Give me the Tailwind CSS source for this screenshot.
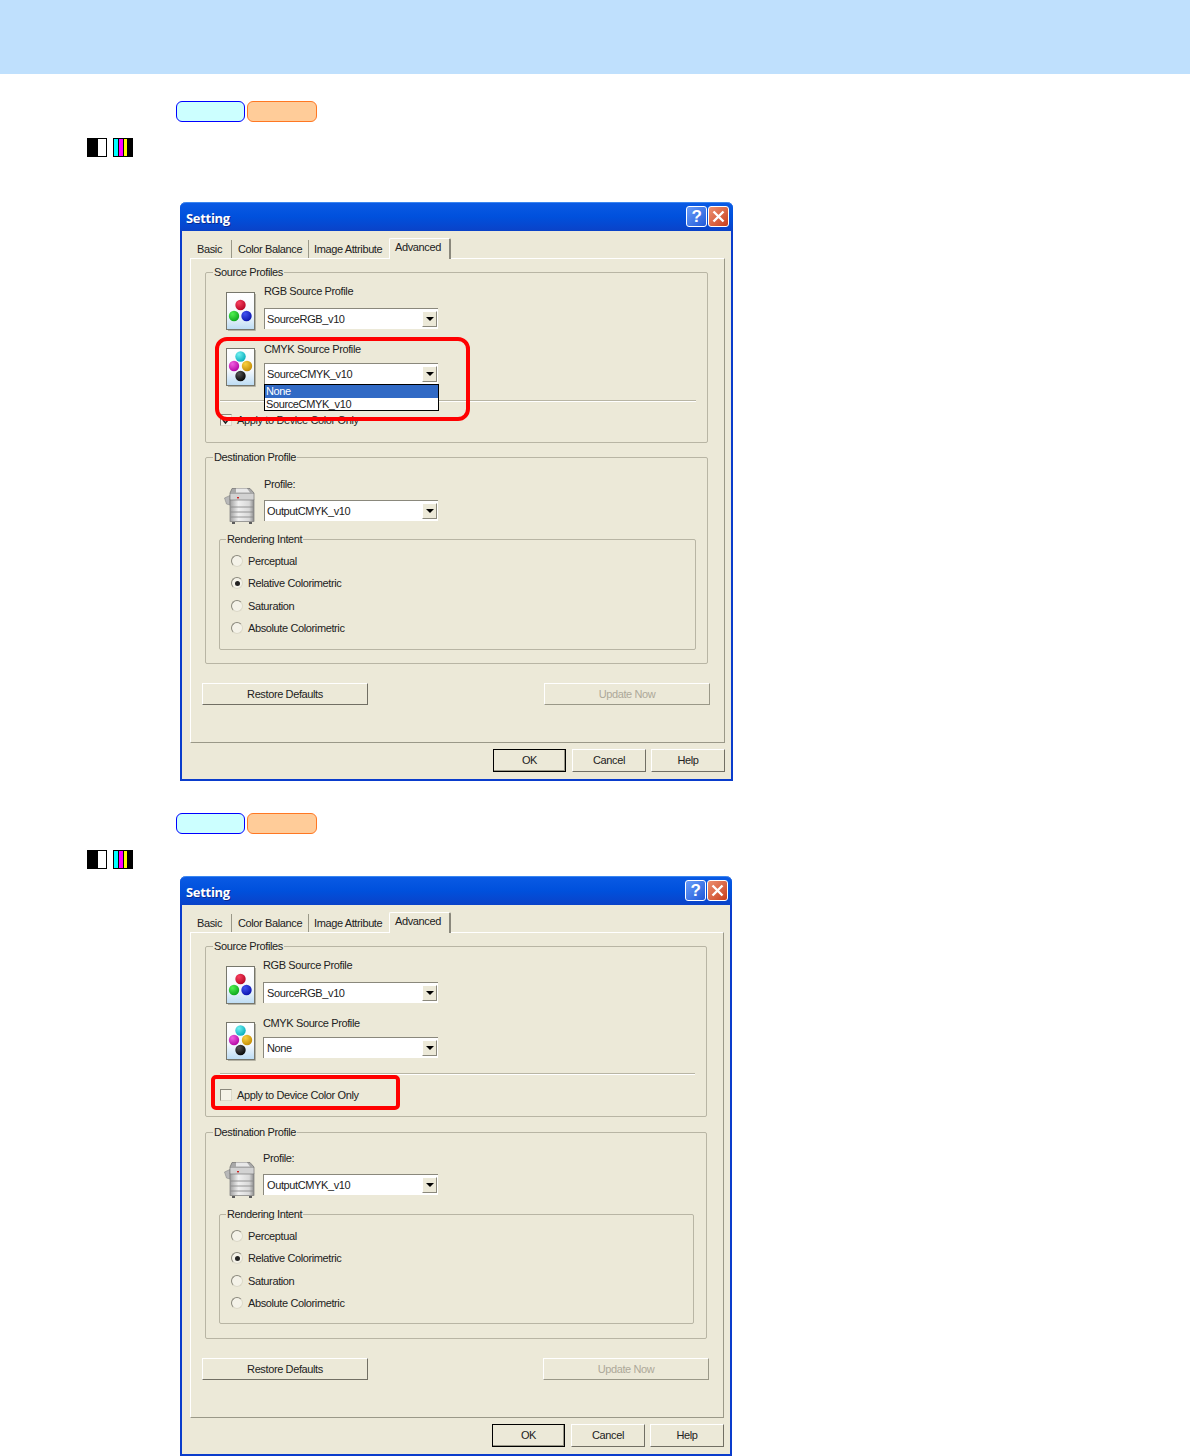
<!DOCTYPE html>
<html lang="en">
<head>
  <meta charset="UTF-8">
  <title>Setting</title>
  <script src="https://cdn.jsdelivr.net/npm/@tailwindcss/browser@4"></script>
</head>
<body class="relative w-[1190px] h-[1456px] overflow-hidden bg-white font-['Liberation_Sans',sans-serif] text-[11px] leading-[14px] tracking-[-0.38px] text-[#222]">

  <svg class="absolute w-0 h-0">
    <defs>
      <linearGradient id="paper" x1="0" y1="0" x2="0" y2="1">
        <stop offset="0" stop-color="#ffffff"/><stop offset="0.6" stop-color="#f4f8fc"/><stop offset="1" stop-color="#bcdcf4"/>
      </linearGradient>
      <radialGradient id="r" cx="0.35" cy="0.3" r="0.8"><stop offset="0" stop-color="#f84060"/><stop offset="1" stop-color="#b00020"/></radialGradient>
      <radialGradient id="g" cx="0.35" cy="0.3" r="0.8"><stop offset="0" stop-color="#50f050"/><stop offset="1" stop-color="#08a018"/></radialGradient>
      <radialGradient id="b" cx="0.35" cy="0.3" r="0.8"><stop offset="0" stop-color="#4050f0"/><stop offset="1" stop-color="#0810a8"/></radialGradient>
      <radialGradient id="c" cx="0.35" cy="0.3" r="0.8"><stop offset="0" stop-color="#70f0f0"/><stop offset="1" stop-color="#00a8b8"/></radialGradient>
      <radialGradient id="m" cx="0.35" cy="0.3" r="0.8"><stop offset="0" stop-color="#f060e0"/><stop offset="1" stop-color="#b000a0"/></radialGradient>
      <radialGradient id="y" cx="0.35" cy="0.3" r="0.8"><stop offset="0" stop-color="#f8d040"/><stop offset="1" stop-color="#c08800"/></radialGradient>
      <radialGradient id="k" cx="0.35" cy="0.3" r="0.8"><stop offset="0" stop-color="#555555"/><stop offset="1" stop-color="#000000"/></radialGradient>
      <linearGradient id="copier" x1="0" y1="0" x2="1" y2="0">
        <stop offset="0" stop-color="#a0a0a0"/><stop offset="0.35" stop-color="#f0f0f0"/><stop offset="0.8" stop-color="#d8d8d8"/><stop offset="1" stop-color="#8c8c8c"/>
      </linearGradient>
      <symbol id="icon-rgb" viewBox="0 0 30 39">
        <rect x="0.5" y="0.5" width="28" height="37" fill="url(#paper)" stroke="#77776c"/>
        <path d="M29.5 2V38.5H2" fill="none" stroke="#b4b2a4"/>
        <circle cx="14.5" cy="13" r="5.2" fill="url(#r)"/>
        <circle cx="8" cy="24" r="5.2" fill="url(#g)"/>
        <circle cx="20.5" cy="24" r="5.2" fill="url(#b)"/>
      </symbol>
      <symbol id="icon-cmyk" viewBox="0 0 30 39">
        <rect x="0.5" y="0.5" width="28" height="37" fill="url(#paper)" stroke="#77776c"/>
        <path d="M29.5 2V38.5H2" fill="none" stroke="#b4b2a4"/>
        <circle cx="14.5" cy="8.5" r="5.2" fill="url(#c)"/>
        <circle cx="8" cy="18" r="5.2" fill="url(#m)"/>
        <circle cx="21" cy="18" r="5.2" fill="url(#y)"/>
        <circle cx="14.5" cy="28" r="5.2" fill="url(#k)"/>
      </symbol>
      <symbol id="icon-copier" viewBox="0 0 33 40">
        <path d="M0.5 13L6 10.5V20L2.5 19Z" fill="#b8b8b8" stroke="#8a8a8a" stroke-width="0.6"/>
        <path d="M8 3.5H26L30 8V15H6V8Z" fill="#a8a8a8" stroke="#6e6e6e" stroke-width="0.7"/>
        <path d="M12 3.5H23L26 7.5H12Z" fill="#e8e8e8"/>
        <path d="M6.5 9H29.5V15H6.5Z" fill="#d2d2d2"/>
        <rect x="13" y="12" width="2" height="1.4" fill="#d02020"/>
        <rect x="6" y="15" width="24" height="21.5" fill="url(#copier)" stroke="#7a7a7a" stroke-width="0.7"/>
        <path d="M6.5 22H29.5M6.5 27H29.5M6.5 32H29.5" stroke="#8a8a8a" stroke-width="0.9"/>
        <path d="M8 37H11V39H8ZM25 37H28V39H25Z" fill="#5c5c5c"/>
      </symbol>
      <symbol id="arrow" viewBox="0 0 8 4"><path d="M0 0H8L4 4Z" fill="#000"/></symbol>
    </defs>
  </svg>

  <header class="h-[74px] bg-[#bfe0fd]"></header>

  <!-- first step -->
  <div class="mt-[27px] pl-[176px] flex gap-[2px]">
    <span class="w-[69px] h-[21px] rounded-[6px] border border-[#0000ff] bg-[#ccffff]"></span>
    <span class="w-[70px] h-[21px] rounded-[6px] border border-[#ff7722] bg-[#ffcc99]"></span>
  </div>
  <div class="mt-[16px] pl-[87px] flex gap-[6px]">
    <span class="w-[20px] h-[19px] border border-black flex"><span class="w-[10px] bg-black"></span></span>
    <span class="w-[20px] h-[19px] border border-black flex bg-black gap-[1px]"><span class="w-[4px] bg-[#00ffff]"></span><span class="w-[4px] bg-[#ff00ff]"></span><span class="w-[3px] bg-[#ffff00]"></span></span>
  </div>

  <section class="mt-[45px] ml-[180px] w-[553px] h-[579px] relative flex flex-col rounded-t-[6px] border-x-2 border-b-2 border-[#0a3ccc] bg-[#ece9d8]">
    <div class="-mx-[2px] h-[29px] shrink-0 rounded-t-[6px] border-t border-[#3a86f0] bg-gradient-to-b from-[#0a5ae4] via-[#0050dc] to-[#0a42c8] flex items-center pl-[6px] pr-[4px]">
      <span class="mt-[1px] font-['Open_Sans',sans-serif] font-bold text-[13px] tracking-[-0.3px] text-white [text-shadow:1px_1px_#0a2a90]">Setting</span>
      <span class="ml-auto mb-[1px] w-[21px] h-[21px] rounded-[3px] border border-white bg-gradient-to-br from-[#6a9cf8] to-[#2058d8] text-white font-bold text-[17px] leading-[19px] text-center">?</span>
      <span class="ml-[1px] mb-[1px] w-[21px] h-[21px] rounded-[3px] border border-white bg-gradient-to-br from-[#ec9070] to-[#c83c18] flex items-center justify-center">
        <svg class="w-[13px] h-[13px]" viewBox="0 0 13 13"><path d="M1.5 1.5L11.5 11.5M11.5 1.5L1.5 11.5" stroke="#fff" stroke-width="2.4"/></svg>
      </span>
    </div>
    <div class="pt-[7px] pl-[8px] pr-[6px] flex flex-col flex-1">
      <div class="relative z-10 h-[20px] pl-[2px] flex items-end">
        <span class="w-[40px] h-[18px] pl-[5px] pt-[2px] border-r border-[#9a9888]">Basic</span>
        <span class="w-[77px] h-[18px] pl-[6px] pt-[2px] border-r border-[#9a9888]">Color Balance</span>
        <span class="w-[80px] h-[18px] pl-[5px] pt-[2px]">Image Attribute</span>
        <span class="w-[62px] h-[21px] -mb-px pl-[5px] pt-[1px] bg-[#ece9d8] border-t border-l border-white border-r-2 border-r-[#8a887c] rounded-t-[2px]">Advanced</span>
      </div>
      <div class="h-[485px] border border-white border-r-[#9a9888] border-b-[#9a9888] pt-[6px] pl-[14px]">
        <fieldset class="w-[503px] h-[178px] border border-[#b8b5a4] rounded-[2px]">
          <legend class="ml-[7px] px-px h-[14px]">Source Profiles</legend>
          <div class="mt-[5px] pl-[20px] flex items-start">
            <svg class="mt-[8px] w-[30px] h-[39px]"><use href="#icon-rgb"/></svg>
            <div class="ml-[8px]">
              <div class="h-[14px]">RGB Source Profile</div>
              <div class="mt-[10px] w-[174px] h-[21px] bg-white border-t border-l border-[#8a887c] flex items-center pl-[2px]">
                <span>SourceRGB_v10</span>
                <span class="ml-auto mr-[1px] w-[15px] h-[16px] bg-[#ece9d8] border border-white border-r-[#8a887c] border-b-[#8a887c] flex items-center justify-center"><svg class="w-[8px] h-[4px]"><use href="#arrow"/></svg></span>
              </div>
            </div>
          </div>
          <div class="mt-[11px] pl-[20px] flex items-start">
            <svg class="mt-[6px] w-[30px] h-[39px]"><use href="#icon-cmyk"/></svg>
            <div class="ml-[8px]">
              <div class="h-[14px]">CMYK Source Profile</div>
              <div class="relative mt-[7px] w-[174px] h-[21px] bg-white border-t border-l border-[#8a887c] flex items-center pl-[2px]">
                <span>SourceCMYK_v10</span>
                <span class="ml-auto mr-[1px] w-[15px] h-[16px] bg-[#ece9d8] border border-white border-r-[#8a887c] border-b-[#8a887c] flex items-center justify-center"><svg class="w-[8px] h-[4px]"><use href="#arrow"/></svg></span>
                <div class="absolute z-10 -left-px top-[20px] w-[175px] h-[27px] bg-white border border-black">
                  <div class="h-[13px] leading-[13px] pl-px bg-[#316ac5] text-white">None</div>
                  <div class="h-[12px] leading-[12px] pl-px">SourceCMYK_v10</div>
                </div>
              </div>
            </div>
          </div>
          <div class="mt-[13px] ml-[14px] mr-[11px] h-[2px] border-t border-b border-t-[#b8b5a4] border-b-white"></div>
          <div class="mt-[11px] pl-[14px] flex items-center">
            <span class="w-[12px] h-[12px] bg-[#f4f2e8] border border-[#8a887c] border-r-[#dcd9c8] border-b-[#dcd9c8] flex items-center justify-center"><svg class="w-[9px] h-[9px]" viewBox="0 0 9 9"><path d="M1 4L3.5 7L8 1.5" fill="none" stroke="#222" stroke-width="1.6"/></svg></span>
            <span class="ml-[5px]">Apply to Device Color Only</span>
          </div>
        </fieldset>
        <fieldset class="mt-[7px] w-[503px] h-[214px] border border-[#b8b5a4] rounded-[2px]">
          <legend class="ml-[7px] px-px h-[14px]">Destination Profile</legend>
          <div class="mt-[13px] pl-[19px] flex items-start">
            <svg class="mt-[8px] w-[33px] h-[40px] -ml-[1px]"><use href="#icon-copier"/></svg>
            <div class="ml-[7px]">
              <div class="h-[14px]">Profile:</div>
              <div class="mt-[9px] w-[174px] h-[21px] bg-white border-t border-l border-[#8a887c] flex items-center pl-[2px]">
                <span>OutputCMYK_v10</span>
                <span class="ml-auto mr-[1px] w-[15px] h-[16px] bg-[#ece9d8] border border-white border-r-[#8a887c] border-b-[#8a887c] flex items-center justify-center"><svg class="w-[8px] h-[4px]"><use href="#arrow"/></svg></span>
              </div>
            </div>
          </div>
          <fieldset class="mt-[7px] ml-[13px] w-[477px] h-[118px] border border-[#b8b5a4] rounded-[2px] pl-[11px]">
            <legend class="-ml-[5px] px-px h-[14px]">Rendering Intent</legend>
            <div class="mt-[4px] flex flex-col">
              <div class="h-[22.3px] flex items-center"><span class="w-[12px] h-[12px] rounded-full bg-[#f4f2e8] border border-[#8a887c] border-r-[#dcd9c8] border-b-[#dcd9c8]"></span><span class="ml-[5px]">Perceptual</span></div>
              <div class="h-[22.3px] flex items-center"><span class="w-[12px] h-[12px] rounded-full bg-[#f4f2e8] border border-[#8a887c] border-r-[#dcd9c8] border-b-[#dcd9c8] flex items-center justify-center"><span class="w-[5px] h-[5px] rounded-full bg-[#222]"></span></span><span class="ml-[5px]">Relative Colorimetric</span></div>
              <div class="h-[22.3px] flex items-center"><span class="w-[12px] h-[12px] rounded-full bg-[#f4f2e8] border border-[#8a887c] border-r-[#dcd9c8] border-b-[#dcd9c8]"></span><span class="ml-[5px]">Saturation</span></div>
              <div class="h-[22.3px] flex items-center"><span class="w-[12px] h-[12px] rounded-full bg-[#f4f2e8] border border-[#8a887c] border-r-[#dcd9c8] border-b-[#dcd9c8]"></span><span class="ml-[5px]">Absolute Colorimetric</span></div>
            </div>
          </fieldset>
        </fieldset>
        <div class="mt-[19px] -ml-[3px] w-[508px] flex justify-between">
          <span class="w-[166px] h-[22px] pb-[1px] border border-white border-r-[#716f64] border-b-[#716f64] flex items-center justify-center">Restore Defaults</span>
          <span class="w-[166px] h-[22px] pb-[1px] border border-white border-r-[#9a9888] border-b-[#9a9888] flex items-center justify-center text-[#aca899]">Update Now</span>
        </div>
      </div>
      <div class="mt-[6px] flex justify-end gap-[6px]">
        <span class="w-[73px] h-[23px] border border-black shadow-[inset_-1px_-1px_#9a9888] flex items-center justify-center pb-[2px]">OK</span>
        <span class="w-[74px] h-[23px] mr-[-1px] border border-white border-r-[#716f64] border-b-[#716f64] flex items-center justify-center pb-[2px]">Cancel</span>
        <span class="w-[74px] h-[23px] border border-white border-r-[#716f64] border-b-[#716f64] flex items-center justify-center pb-[2px]">Help</span>
      </div>
    </div>
  </section>

  <!-- second step -->
  <div class="mt-[32px] pl-[176px] flex gap-[2px]">
    <span class="w-[69px] h-[21px] rounded-[6px] border border-[#0000ff] bg-[#ccffff]"></span>
    <span class="w-[70px] h-[21px] rounded-[6px] border border-[#ff7722] bg-[#ffcc99]"></span>
  </div>
  <div class="mt-[16px] pl-[87px] flex gap-[6px]">
    <span class="w-[20px] h-[19px] border border-black flex"><span class="w-[10px] bg-black"></span></span>
    <span class="w-[20px] h-[19px] border border-black flex bg-black gap-[1px]"><span class="w-[4px] bg-[#00ffff]"></span><span class="w-[4px] bg-[#ff00ff]"></span><span class="w-[3px] bg-[#ffff00]"></span></span>
  </div>

  <section class="mt-[7px] ml-[180px] w-[552px] h-[580px] relative flex flex-col rounded-t-[6px] border-x-2 border-b-2 border-[#0a3ccc] bg-[#ece9d8]">
    <div class="-mx-[2px] h-[29px] shrink-0 rounded-t-[6px] border-t border-[#3a86f0] bg-gradient-to-b from-[#0a5ae4] via-[#0050dc] to-[#0a42c8] flex items-center pl-[6px] pr-[4px]">
      <span class="mt-[1px] font-['Open_Sans',sans-serif] font-bold text-[13px] tracking-[-0.3px] text-white [text-shadow:1px_1px_#0a2a90]">Setting</span>
      <span class="ml-auto mb-[1px] w-[21px] h-[21px] rounded-[3px] border border-white bg-gradient-to-br from-[#6a9cf8] to-[#2058d8] text-white font-bold text-[17px] leading-[19px] text-center">?</span>
      <span class="ml-[1px] mb-[1px] w-[21px] h-[21px] rounded-[3px] border border-white bg-gradient-to-br from-[#ec9070] to-[#c83c18] flex items-center justify-center">
        <svg class="w-[13px] h-[13px]" viewBox="0 0 13 13"><path d="M1.5 1.5L11.5 11.5M11.5 1.5L1.5 11.5" stroke="#fff" stroke-width="2.4"/></svg>
      </span>
    </div>
    <div class="pt-[7px] pl-[8px] pr-[6px] flex flex-col flex-1">
      <div class="relative z-10 h-[20px] pl-[2px] flex items-end">
        <span class="w-[40px] h-[18px] pl-[5px] pt-[2px] border-r border-[#9a9888]">Basic</span>
        <span class="w-[77px] h-[18px] pl-[6px] pt-[2px] border-r border-[#9a9888]">Color Balance</span>
        <span class="w-[80px] h-[18px] pl-[5px] pt-[2px]">Image Attribute</span>
        <span class="w-[62px] h-[21px] -mb-px pl-[5px] pt-[1px] bg-[#ece9d8] border-t border-l border-white border-r-2 border-r-[#8a887c] rounded-t-[2px]">Advanced</span>
      </div>
      <div class="h-[486px] border border-white border-r-[#9a9888] border-b-[#9a9888] pt-[6px] pl-[14px]">
        <fieldset class="w-[502px] h-[178px] border border-[#b8b5a4] rounded-[2px]">
          <legend class="ml-[7px] px-px h-[14px]">Source Profiles</legend>
          <div class="mt-[5px] pl-[20px] flex items-start">
            <svg class="mt-[8px] w-[30px] h-[39px]"><use href="#icon-rgb"/></svg>
            <div class="ml-[7px]">
              <div class="h-[14px]">RGB Source Profile</div>
              <div class="mt-[10px] w-[175px] h-[21px] bg-white border-t border-l border-[#8a887c] flex items-center pl-[3px]">
                <span>SourceRGB_v10</span>
                <span class="ml-auto mr-[1px] w-[15px] h-[16px] bg-[#ece9d8] border border-white border-r-[#8a887c] border-b-[#8a887c] flex items-center justify-center"><svg class="w-[8px] h-[4px]"><use href="#arrow"/></svg></span>
              </div>
            </div>
          </div>
          <div class="mt-[11px] pl-[20px] flex items-start">
            <svg class="mt-[6px] w-[30px] h-[39px]"><use href="#icon-cmyk"/></svg>
            <div class="ml-[7px]">
              <div class="h-[14px]">CMYK Source Profile</div>
              <div class="mt-[7px] w-[175px] h-[21px] bg-white border-t border-l border-[#8a887c] flex items-center pl-[3px]">
                <span>None</span>
                <span class="ml-auto mr-[1px] w-[15px] h-[16px] bg-[#ece9d8] border border-white border-r-[#8a887c] border-b-[#8a887c] flex items-center justify-center"><svg class="w-[8px] h-[4px]"><use href="#arrow"/></svg></span>
              </div>
            </div>
          </div>
          <div class="mt-[12px] ml-[14px] mr-[11px] h-[2px] border-t border-b border-t-[#b8b5a4] border-b-white"></div>
          <div class="mt-[13px] pl-[14px] flex items-center">
            <span class="w-[12px] h-[12px] bg-[#f4f2e8] border border-[#8a887c] border-r-[#dcd9c8] border-b-[#dcd9c8]"></span>
            <span class="ml-[5px]">Apply to Device Color Only</span>
          </div>
        </fieldset>
        <fieldset class="mt-[8px] w-[502px] h-[214px] border border-[#b8b5a4] rounded-[2px]">
          <legend class="ml-[7px] px-px h-[14px]">Destination Profile</legend>
          <div class="mt-[12px] pl-[19px] flex items-start">
            <svg class="mt-[8px] w-[33px] h-[40px] -ml-[1px]"><use href="#icon-copier"/></svg>
            <div class="ml-[6px]">
              <div class="h-[14px]">Profile:</div>
              <div class="mt-[9px] w-[175px] h-[21px] bg-white border-t border-l border-[#8a887c] flex items-center pl-[3px]">
                <span>OutputCMYK_v10</span>
                <span class="ml-auto mr-[1px] w-[15px] h-[16px] bg-[#ece9d8] border border-white border-r-[#8a887c] border-b-[#8a887c] flex items-center justify-center"><svg class="w-[8px] h-[4px]"><use href="#arrow"/></svg></span>
              </div>
            </div>
          </div>
          <fieldset class="mt-[8px] ml-[13px] w-[475px] h-[117px] border border-[#b8b5a4] rounded-[2px] pl-[11px]">
            <legend class="-ml-[5px] px-px h-[14px]">Rendering Intent</legend>
            <div class="mt-[4px] flex flex-col">
              <div class="h-[22.3px] flex items-center"><span class="w-[12px] h-[12px] rounded-full bg-[#f4f2e8] border border-[#8a887c] border-r-[#dcd9c8] border-b-[#dcd9c8]"></span><span class="ml-[5px]">Perceptual</span></div>
              <div class="h-[22.3px] flex items-center"><span class="w-[12px] h-[12px] rounded-full bg-[#f4f2e8] border border-[#8a887c] border-r-[#dcd9c8] border-b-[#dcd9c8] flex items-center justify-center"><span class="w-[5px] h-[5px] rounded-full bg-[#222]"></span></span><span class="ml-[5px]">Relative Colorimetric</span></div>
              <div class="h-[22.3px] flex items-center"><span class="w-[12px] h-[12px] rounded-full bg-[#f4f2e8] border border-[#8a887c] border-r-[#dcd9c8] border-b-[#dcd9c8]"></span><span class="ml-[5px]">Saturation</span></div>
              <div class="h-[22.3px] flex items-center"><span class="w-[12px] h-[12px] rounded-full bg-[#f4f2e8] border border-[#8a887c] border-r-[#dcd9c8] border-b-[#dcd9c8]"></span><span class="ml-[5px]">Absolute Colorimetric</span></div>
            </div>
          </fieldset>
        </fieldset>
        <div class="mt-[19px] -ml-[3px] w-[507px] flex justify-between">
          <span class="w-[166px] h-[22px] pb-[1px] border border-white border-r-[#716f64] border-b-[#716f64] flex items-center justify-center">Restore Defaults</span>
          <span class="w-[166px] h-[22px] pb-[1px] border border-white border-r-[#9a9888] border-b-[#9a9888] flex items-center justify-center text-[#aca899]">Update Now</span>
        </div>
      </div>
      <div class="mt-[6px] flex justify-end gap-[6px]">
        <span class="w-[73px] h-[23px] border border-black shadow-[inset_-1px_-1px_#9a9888] flex items-center justify-center pb-[2px]">OK</span>
        <span class="w-[74px] h-[23px] mr-[-1px] border border-white border-r-[#716f64] border-b-[#716f64] flex items-center justify-center pb-[2px]">Cancel</span>
        <span class="w-[74px] h-[23px] border border-white border-r-[#716f64] border-b-[#716f64] flex items-center justify-center pb-[2px]">Help</span>
      </div>
    </div>
  </section>

  <!-- red callouts over the screenshots -->
  <div class="absolute left-[215px] top-[337px] w-[255px] h-[84px] rounded-[12px] border-[4px] border-[#ff0000]"></div>
  <div class="absolute left-[211px] top-[1075px] w-[189px] h-[35px] rounded-[5px] border-[4px] border-[#ff0000]"></div>
</body>
</html>
